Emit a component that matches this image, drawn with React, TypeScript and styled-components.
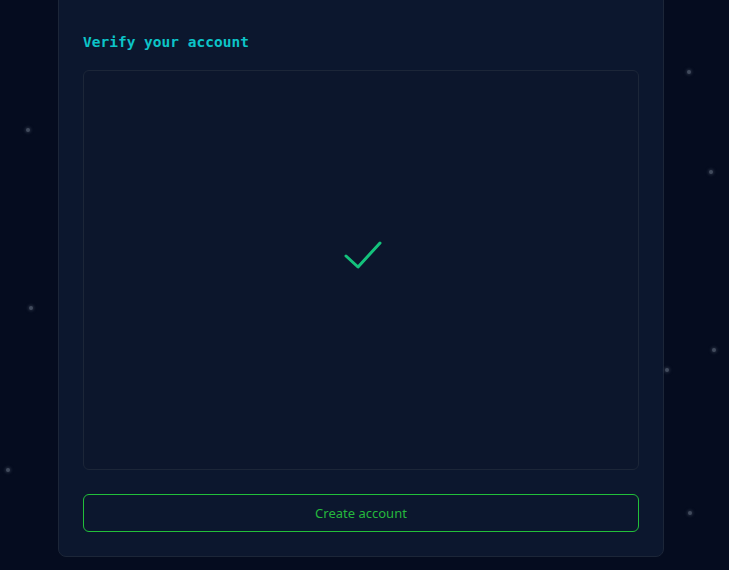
import React from 'react';
import styled, { createGlobalStyle } from 'styled-components';

const GlobalStyle = createGlobalStyle`
  html, body {
    margin: 0;
    padding: 0;
    height: 100%;
    background: #050c1f;
    overflow: hidden;
  }
  #root {
    height: 100%;
  }
`;

const Page = styled.div`
  position: relative;
  height: 570px;
  background: #050c1f;
  overflow: hidden;
`;

const Star = styled.span`
  position: absolute;
  width: 4px;
  height: 4px;
  border-radius: 50%;
  background: #566072;
  box-shadow: 0 0 3px 1px rgba(86, 96, 114, 0.5);
  opacity: 0.75;
`;

const Card = styled.section`
  box-sizing: border-box;
  width: 606px;
  margin: -40px 0 0 58px;
  padding: 71px 24px 24px;
  background: #0c172e;
  border: 1px solid #1c2638;
  border-radius: 8px;
  display: flex;
  flex-direction: column;
`;

const Title = styled.h2`
  margin: 0 0 18px;
  height: 20px;
  line-height: 20px;
  font-family: 'DejaVu Sans Mono', 'Liberation Mono', monospace;
  font-weight: bold;
  font-size: 14.5px;
  color: #0cc4c8;
`;

const Challenge = styled.div`
  box-sizing: border-box;
  height: 400px;
  border: 1px solid #1c2638;
  border-radius: 6px;
  background: #0c162c;
  display: flex;
  align-items: center;
  justify-content: center;
  padding-bottom: 30px;
`;

const SubmitButton = styled.button`
  box-sizing: border-box;
  margin-top: 24px;
  height: 38px;
  width: 100%;
  background: transparent;
  border: 1px solid #22c03a;
  border-radius: 6px;
  color: #25b83d;
  font-family: 'Noto Sans', 'Open Sans', sans-serif;
  font-size: 13px;
  cursor: pointer;
`;

const stars = [
  [26, 128], [29, 306], [6, 468], [687, 70],
  [709, 170], [712, 348], [665, 368], [688, 511],
];

const CheckMark = () => (
  <svg width="42" height="32" viewBox="0 0 42 32" fill="none" style={{ marginLeft: 3 }}>
    <polyline
      points="4,17 16,28 38,4"
      stroke="#14c27c"
      strokeWidth="3"
      strokeLinecap="round"
      strokeLinejoin="round"
    />
  </svg>
);

export default function App() {
  return (
    <>
      <GlobalStyle />
      <Page>
        {stars.map(([x, y], i) => (
          <Star key={i} style={{ left: x, top: y }} />
        ))}
        <Card>
          <Title>Verify your account</Title>
          <Challenge>
            <CheckMark />
          </Challenge>
          <SubmitButton>Create account</SubmitButton>
        </Card>
      </Page>
    </>
  );
}
